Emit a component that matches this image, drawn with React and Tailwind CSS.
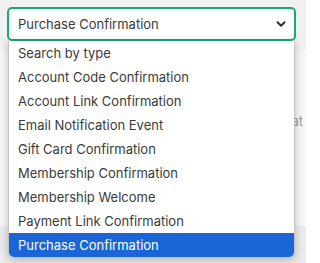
import { ChevronDown } from "lucide-react";

const options = [
  "Search by type",
  "Account Code Confirmation",
  "Account Link Confirmation",
  "Email Notification Event",
  "Gift Card Confirmation",
  "Membership Confirmation",
  "Membership Welcome",
  "Payment Link Confirmation",
  "Purchase Confirmation",
];

const App = () => {
  const selected = "Purchase Confirmation";

  return (
    <div
      className="relative w-[306px] h-[263px] overflow-hidden bg-[#ececec]"
      style={{ fontFamily: "Inter, 'Noto Sans', sans-serif" }}
    >
      {/* page behind the open select */}
      <div className="h-[50px] bg-[#f1f1f1]"></div>
      <div className="h-[176px] bg-[#f8f8f8] pt-[62px]">
        <div className="ml-[260px] text-[13px] text-[#9b9b9b] whitespace-nowrap">Format</div>
      </div>

      {/* select */}
      <div className="absolute left-[7px] top-[7px] w-[289px] h-[34px] bg-white border-2 border-[#16a97e] rounded-[5px] flex items-center justify-between pl-[9px] pr-[6px]">
        <span className="text-[13px] text-[#3a3a3a] pt-[2px]">{selected}</span>
        <ChevronDown size={14} strokeWidth={3.5} className="text-[#333]" />
      </div>

      {/* options list */}
      <div className="absolute left-[8px] top-[41px] w-[287px] bg-white border-x border-b border-[#c4c4c4] rounded-b-[6px] shadow-[0_2px_10px_rgba(0,0,0,0.25)] overflow-hidden">
        {options.map((opt) => (
          <div
            key={opt}
            className={`h-[24px] flex items-center pl-[9px] pt-[2px] text-[13px] ${
              opt === selected ? "bg-[#1a66d6] text-white" : "text-[#3a3a3a]"
            }`}
          >
            {opt}
          </div>
        ))}
      </div>
    </div>
  );
};

export default App;
